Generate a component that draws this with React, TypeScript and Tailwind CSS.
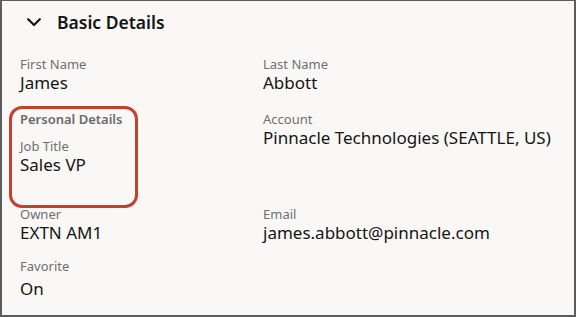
import React from 'react';

function Field({ label, value, gap = 'mt-0' }: { label: string; value: string; gap?: string }) {
  return (
    <div>
      <p className="text-[13px] leading-[16px] text-[#6f6f6f]">{label}</p>
      <p className={`${gap} text-[17px] leading-[22px] text-[#161513]`}>{value}</p>
    </div>
  );
}

export default function App() {
  return (
    <div
      className="relative w-[576px] h-[317px] overflow-hidden bg-[#f9f8f6] border-t border-l-2 border-r-2 border-b-2 border-[#5c5c5c]"
      style={{ fontFamily: '"Noto Sans", "Open Sans", sans-serif' }}
    >
      {/* Section header */}
      <div className="flex items-center h-[41px] pl-[25px]">
        <svg width="14" height="9" viewBox="0 0 14 9" fill="none" className="mt-[1px]">
          <path d="M1.2 1.2 L7 7 L12.8 1.2" stroke="#161513" strokeWidth="2.2" strokeLinecap="round" strokeLinejoin="round" />
        </svg>
        <h2 className="ml-[16px] text-[17.5px] leading-[24px] font-semibold text-[#161513]">Basic Details</h2>
      </div>

      <div className="grid grid-cols-[243px_1fr] pl-[18px] pt-[14px]">
        {/* Row 1 */}
        <Field label="First Name" value="James" />
        <Field label="Last Name" value="Abbott" />

        {/* Row 2 */}
        <div className="mt-[17px]">
          <p className="text-[13px] leading-[16px] font-semibold text-[#6a6a6a]">Personal Details</p>
          <div className="mt-[11px]">
            <Field label="Job Title" value="Sales VP" />
          </div>
        </div>
        <div className="mt-[17px]">
          <Field label="Account" value="Pinnacle Technologies (SEATTLE, US)" />
        </div>

        {/* Row 3 */}
        <div className="mt-[30px]">
          <Field label="Owner" value="EXTN AM1" />
        </div>
        <div className="mt-[30px]">
          <Field label="Email" value="james.abbott@pinnacle.com" />
        </div>

        {/* Row 4 */}
        <div className="mt-[14px]">
          <Field label="Favorite" value="On" gap="mt-[4px]" />
        </div>
      </div>

      {/* highlight around the personal details group */}
      <div className="absolute left-[7px] top-[105px] w-[129px] h-[102px] rounded-[13px] border-[3px] border-[#c4402f] pointer-events-none" />
    </div>
  );
}
